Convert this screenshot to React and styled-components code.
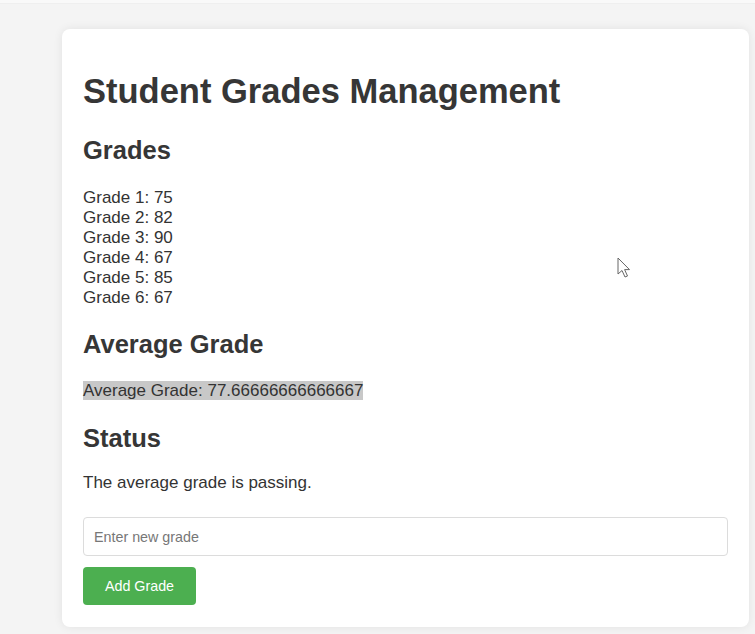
import React, { useState } from "react";
import styled, { createGlobalStyle } from "styled-components";

const GlobalStyle = createGlobalStyle`
  html, body {
    margin: 0;
    padding: 0;
    background: #f4f4f4;
    font-family: "Liberation Sans", Arial, sans-serif;
    color: #333;
  }
`;

const TopBand = styled.div`
  height: 3px;
  background: #f9f9f9;
  border-bottom: 1px solid #efefef;
`;

const Page = styled.div`
  position: relative;
  padding: 25px 6px 7px 62px;
`;

const Card = styled.main`
  width: 645px;
  padding: 20px 21px 22px;
  background: #fff;
  border-radius: 8px;
  box-shadow: 0 0 10px rgba(0, 0, 0, 0.08);
  display: flex;
  flex-direction: column;
  align-items: flex-start;
`;

const Title = styled.h1`
  margin: 22px 0 0;
  font-size: 34.5px;
  line-height: 40px;
  font-weight: bold;
  color: #363636;
`;

const SectionTitle = styled.h2`
  margin: ${(p) => p.$top}px 0 0;
  font-size: 25.5px;
  line-height: 30px;
  font-weight: bold;
  color: #363636;
`;

const List = styled.ul`
  list-style: none;
  margin: 23px 0 0;
  padding: 0;
`;

const Item = styled.li`
  font-size: 17px;
  line-height: 20px;
`;

const Text = styled.p`
  margin: ${(p) => p.$top}px 0 0;
  font-size: 17px;
  line-height: 20px;
`;

const Selected = styled.span`
  background: #c8c8c8;
`;

const Input = styled.input`
  box-sizing: border-box;
  margin-top: 24px;
  width: 100%;
  height: 39px;
  padding: 0 10px;
  border: 1px solid #dcdcdc;
  border-radius: 4px;
  font-family: "Liberation Sans", Arial, sans-serif;
  font-size: 14.3px;
  color: #333;
  background: #fff;
  outline: none;
  &::placeholder {
    color: #777;
  }
`;

const Button = styled.button`
  margin-top: 11px;
  height: 38px;
  width: 113px;
  padding: 0;
  border: none;
  border-radius: 4px;
  background: #4caf50;
  color: #fff;
  font-family: "Liberation Sans", Arial, sans-serif;
  font-size: 14.3px;
  cursor: pointer;
`;

const Cursor = styled.svg`
  position: absolute;
  left: 617px;
  top: 253px;
  pointer-events: none;
`;

const grades = [75, 82, 90, 67, 85, 67];

export default function App() {
  const [value, setValue] = useState("");
  const avg = grades.reduce((a, b) => a + b, 0) / grades.length;
  return (
    <>
      <GlobalStyle />
      <TopBand />
      <Page>
        <Card>
          <Title>Student Grades Management</Title>
          <SectionTitle $top={24}>Grades</SectionTitle>
          <List>
            {grades.map((g, i) => (
              <Item key={i}>
                Grade {i + 1}: {g}
              </Item>
            ))}
          </List>
          <SectionTitle $top={21}>Average Grade</SectionTitle>
          <Text $top={22}>
            <Selected>Average Grade: {avg}</Selected>
          </Text>
          <SectionTitle $top={22}>Status</SectionTitle>
          <Text $top={20}>The average grade is passing.</Text>
          <Input
            placeholder="Enter new grade"
            value={value}
            onChange={(e) => setValue(e.target.value)}
          />
          <Button>Add Grade</Button>
        </Card>
        <Cursor width="16" height="22" viewBox="0 0 16 22">
          <path
            d="M1 1 L1 17 L5 13.5 L8 20 L10.5 19 L7.6 12.6 L12.5 12.6 Z"
            fill="#fff"
            stroke="#666"
            strokeWidth="1"
            strokeLinejoin="round"
          />
        </Cursor>
      </Page>
    </>
  );
}
